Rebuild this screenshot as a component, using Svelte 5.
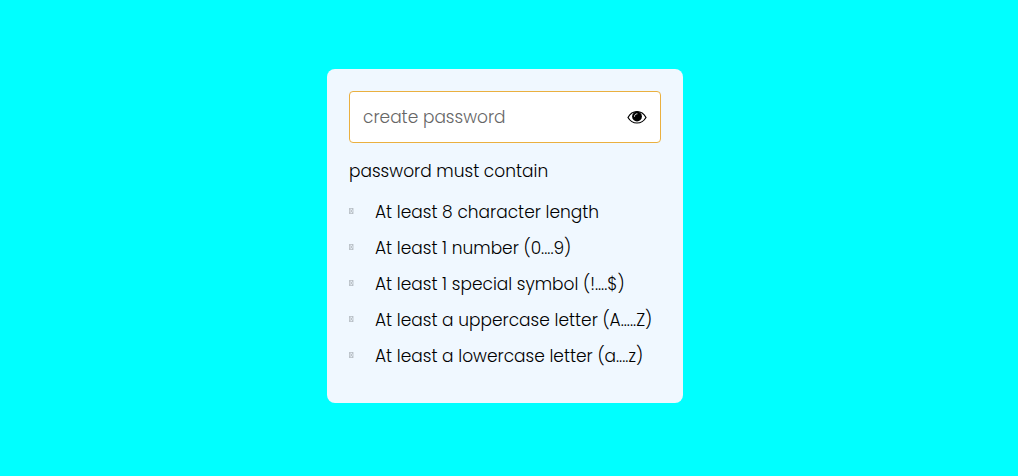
<script>
  let password = $state('');
  let visible = $state(false);

  const rules = [
    'At least 8 character length',
    'At least 1 number (0....9)',
    'At least 1 special symbol (!....$)',
    'At least a uppercase letter (A.....Z)',
    'At least a lowercase letter (a....z)'
  ];
</script>

<main class="page">
  <section class="card">
    <div class="field">
      <input
        type={visible ? 'text' : 'password'}
        placeholder="create password"
        aria-label="create password"
        bind:value={password}
      />
      <button type="button" aria-label="Toggle password visibility" onclick={() => (visible = !visible)}>
        <svg viewBox="0 0 20 14" aria-hidden="true">
          <path d="M1 7.500C3.100 3.700 6.200 1.700 10 1.700S16.900 3.700 19 7.500c-2.100 3.600-5.200 5.500-9 5.500S3.100 11.100 1 7.500Z" fill="none" stroke="#000" stroke-width="1.200" />
          <circle cx="10" cy="6.500" r="4.900" fill="#000" />
          <path d="M7.500 6.300c0-1.500 1-2.500 2.500-2.500" fill="none" stroke="#fff" stroke-width="0.900" stroke-linecap="round" />
        </svg>
      </button>
    </div>
    <p>password must contain</p>
    <ul>
      {#each rules as rule}
        <li>
          <svg viewBox="0 0 5 6" aria-hidden="true">
            <path d="M.5.5h3.500v5H.5zM.5.5l3.500 5M4 .5l-3.500 5" />
          </svg>
          <span>{rule}</span>
        </li>
      {/each}
    </ul>
  </section>
</main>

<style>
  :global(body) {
    margin: 0;
    background: #00ffff;
  }
  .page {
    box-sizing: border-box;
    min-height: 100vh;
    padding: 0 8px 4px 0;
    display: flex;
    align-items: center;
    justify-content: center;
    font-family: Poppins, Inter, sans-serif;
    font-size: 17px;
    font-weight: 300;
    color: #000;
  }
  .card {
    box-sizing: border-box;
    width: 100%;
    max-width: 356px;
    padding: 22px 22px 34px;
    border-radius: 8px;
    background: #f0f8ff;
  }
  .field {
    display: flex;
    align-items: center;
    padding: 0 13px;
    border: 1px solid #eab040;
    border-radius: 4px;
    background: #fff;
  }
  input {
    flex: 1;
    min-width: 0;
    height: 50px;
    padding: 0;
    border: 0;
    outline: 0;
    background: none;
    font: inherit;
    color: #000;
  }
  input::placeholder {
    color: #666;
    opacity: 1;
  }
  button {
    display: flex;
    padding: 0;
    border: 0;
    background: none;
    cursor: pointer;
  }
  button svg {
    width: 20px;
    height: 14px;
  }
  p {
    margin: 16px 0;
    line-height: 24px;
  }
  ul {
    margin: 0;
    padding: 0;
    list-style: none;
    display: grid;
    gap: 10px;
  }
  li {
    display: flex;
    align-items: center;
    gap: 21px;
    line-height: 26px;
    white-space: nowrap;
  }
  li svg {
    flex: none;
    width: 5px;
    height: 6px;
    margin-bottom: 2px;
  }
  li path {
    fill: none;
    stroke: #a3a9ae;
    stroke-width: 0.600;
  }
</style>
